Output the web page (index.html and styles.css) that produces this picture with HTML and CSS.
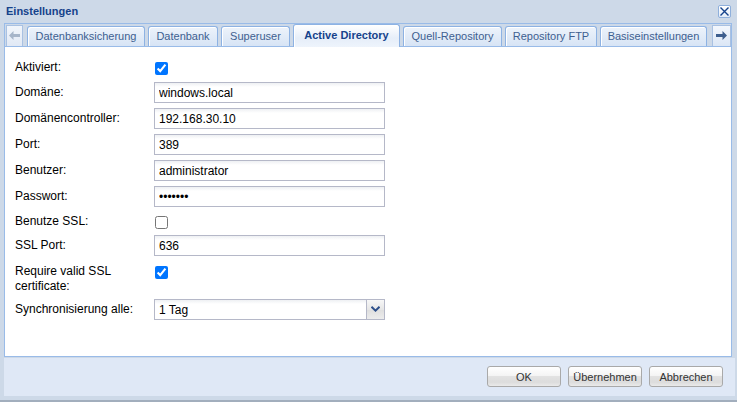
FILE: index.html
```html
<!DOCTYPE html>
<html lang="de">
<head>
<meta charset="utf-8">
<title>Einstellungen</title>
<link rel="stylesheet" href="styles.css">
</head>
<body>
<div class="win">
  <div class="titlebar">
    <span class="title">Einstellungen</span>
    <span class="close"><svg width="11" height="11" viewBox="0 0 11 11"><path d="M1.5 1.5l8 8M9.5 1.5l-8 8" stroke="#15428b" stroke-width="1.4" fill="none"/></svg></span>
  </div>
  <div class="panel">
    <div class="tabstrip">
      <div class="scroller disabled"><svg width="11" height="9" viewBox="0 0 11 9"><path d="M0 4.5L4.5 0v3H11v3H4.5v3z" fill="#a6b5c9"/></svg></div>
      <div class="tabs">
        <div class="tab t1">Datenbanksicherung</div>
        <div class="tab t2">Datenbank</div>
        <div class="tab t3">Superuser</div>
        <div class="tab t4 active">Active Directory</div>
        <div class="tab t5">Quell-Repository</div>
        <div class="tab t6">Repository FTP</div>
        <div class="tab t7">Basiseinstellungen</div>
      </div>
      <div class="scroller right"><svg width="11" height="9" viewBox="0 0 11 9"><path d="M11 4.5L6.5 0v3H0v3h6.5v3z" fill="#3d5e8e"/></svg></div>
    </div>
    <div class="body">
      <div class="row check">
        <label class="lbl">Aktiviert:</label>
        <input class="cb" type="checkbox" checked>
      </div>
      <div class="row">
        <label class="lbl">Domäne:</label>
        <input class="field" type="text" value="windows.local">
      </div>
      <div class="row">
        <label class="lbl">Domänencontroller:</label>
        <input class="field" type="text" value="192.168.30.10">
      </div>
      <div class="row">
        <label class="lbl">Port:</label>
        <input class="field" type="text" value="389">
      </div>
      <div class="row">
        <label class="lbl">Benutzer:</label>
        <input class="field" type="text" value="administrator">
      </div>
      <div class="row">
        <label class="lbl">Passwort:</label>
        <input class="field" type="password" value="geheim7">
      </div>
      <div class="row check ssl">
        <label class="lbl">Benutze SSL:</label>
        <input class="cb" type="checkbox">
      </div>
      <div class="row">
        <label class="lbl">SSL Port:</label>
        <input class="field" type="text" value="636">
      </div>
      <div class="row tall">
        <label class="lbl">Require valid SSL certificate:</label>
        <input class="cb" type="checkbox" checked>
      </div>
      <div class="row">
        <label class="lbl">Synchronisierung alle:</label>
        <div class="combo">
          <input class="combo-input" type="text" value="1 Tag">
          <span class="trigger"><svg width="9" height="6" viewBox="0 0 9 6"><path d="M0.5 0.8L4.5 4.6 8.5 0.8" stroke="#2d4f8a" stroke-width="2" fill="none"/></svg></span>
        </div>
      </div>
    </div>
  </div>
  <div class="footer">
    <button class="btn">OK</button>
    <button class="btn">Übernehmen</button>
    <button class="btn">Abbrechen</button>
  </div>
</div>
</body>
</html>
```

FILE: styles.css
```css
html, body {
  margin: 0;
  padding: 0;
  background: #cdd9e8;
}

body {
  font-family: "Liberation Sans", Arial, sans-serif;
  font-size: 12px;
  color: #000;
}

.win {
  width: 737px;
  height: 402px;
  box-sizing: border-box;
  background: #cdd9e8;
  border-bottom: 2px solid #a2aebd;
  padding-bottom: 4px;
  display: flex;
  flex-direction: column;
}

.titlebar {
  height: 23px;
  display: flex;
  align-items: center;
  justify-content: space-between;
  padding: 0 6px 0 6px;
  box-sizing: border-box;
}

.title {
  font-size: 11px;
  font-weight: bold;
  color: #15428b;
  margin-top: -1px;
}

.close {
  width: 13px;
  height: 13px;
  box-sizing: border-box;
  border: 1px solid #8fb0dc;
  border-radius: 2px;
  background: linear-gradient(#ffffff, #e3ecf8);
  display: flex;
  align-items: center;
  justify-content: center;
  margin-top: 1px;
}

.panel {
  margin: 0 5px 0 4px;
  height: 335px;
  box-sizing: border-box;
  border: 1px solid #99bbe8;
  display: flex;
  flex-direction: column;
  background: #fff;
}

.tabstrip {
  height: 23px;
  box-sizing: border-box;
  background: #cdd9e8;
  border-bottom: 1px solid #99bbe8;
  display: flex;
  align-items: flex-end;
  padding: 0 0 0 1px;
}

.scroller {
  width: 17px;
  height: 21px;
  flex: none;
  box-sizing: border-box;
  border: 1px solid #a9c1e2;
  border-bottom: none;
  background: linear-gradient(#f3f7fd, #dbe6f5);
  display: flex;
  align-items: center;
  justify-content: center;
}

.scroller.disabled {
  background: linear-gradient(#f1f5fb, #e1e9f5);
}

.scroller.right {
  margin-left: auto;
  width: 19px;
}

.tabs {
  display: flex;
  align-items: flex-end;
  gap: 3px;
  margin-left: 4px;
}

.tab {
  height: 20px;
  flex: none;
  box-sizing: border-box;
  border: 1px solid #8db2e3;
  border-bottom: none;
  border-radius: 3px 3px 0 0;
  background: linear-gradient(#edf3fb, #d7e4f5);
  box-shadow: inset 1px 1px 0 #ffffff;
  font-size: 11px;
  color: #3e5f90;
  display: flex;
  align-items: center;
  justify-content: center;
  white-space: nowrap;
}

.t1 { width: 118px; }
.t2 { width: 70px; }
.t3 { width: 69px; }
.t4 { width: 107px; }
.t5 { width: 99px; }
.t6 { width: 92px; }
.t7 { width: 107px; }

.tab.active {
  height: 23px;
  margin-bottom: -1px;
  font-weight: bold;
  color: #15428b;
  background: linear-gradient(#ffffff, #e6eef9 60%, #eef4fc);
  padding-bottom: 1px;
}

.body {
  flex: 1;
  background: #fff;
  padding: 10px 0 0 10px;
}

.row {
  display: flex;
  align-items: center;
  height: 21px;
  margin-bottom: 5px;
}

.row.check {
  height: 22px;
  margin-bottom: 3px;
}

.row.check.ssl {
  margin-top: -1px;
  margin-bottom: 2px;
}

.row.tall {
  height: 33px;
  align-items: flex-start;
}

.lbl {
  width: 139px;
  flex: none;
  line-height: 15px;
  color: #000;
}

.row.tall .lbl {
  padding-top: 3px;
  width: 120px;
  margin-right: 19px;
}

.cb {
  width: 13px;
  height: 13px;
  margin: 0 0 0 1px;
}

.row.check .cb {
  margin-top: 2px;
}

.row.tall .cb {
  margin-top: 5px;
}

.field, .combo-input {
  width: 231px;
  height: 21px;
  box-sizing: border-box;
  border: 1px solid #b5b8c8;
  border-radius: 0;
  padding: 1px 4px 0;
  margin: 0;
  font-family: "Liberation Sans", Arial, sans-serif;
  font-size: 12px;
  color: #000;
  background: linear-gradient(#eef0f3, #ffffff 4px);
  outline: none;
}

.combo {
  display: flex;
  width: 231px;
  height: 21px;
}

.combo-input {
  width: 213px;
}

.trigger {
  width: 18px;
  height: 21px;
  box-sizing: border-box;
  border: 1px solid #b5b8c8;
  border-left: none;
  background: linear-gradient(#f7f7f7, #e6e6e6 50%, #dedede 51%, #ececec);
  display: flex;
  align-items: center;
  justify-content: center;
}

.footer {
  margin: 1px 2px 0 4px;
  height: 38px;
  box-sizing: border-box;
  background: #dfe8f6;
  display: flex;
  justify-content: flex-end;
  align-items: flex-start;
  gap: 7px;
  padding: 8px 12px 0 0;
}

.btn {
  width: 74px;
  height: 21px;
  box-sizing: border-box;
  border: 1px solid #a9a9a9;
  border-radius: 3px;
  background: linear-gradient(#ffffff, #f4f4f4 45%, #e2e2e2 50%, #dcdcdc 80%, #eaeaea);
  font-family: "Liberation Sans", Arial, sans-serif;
  font-size: 11px;
  color: #333;
  padding: 0;
  margin: 0;
}
```
